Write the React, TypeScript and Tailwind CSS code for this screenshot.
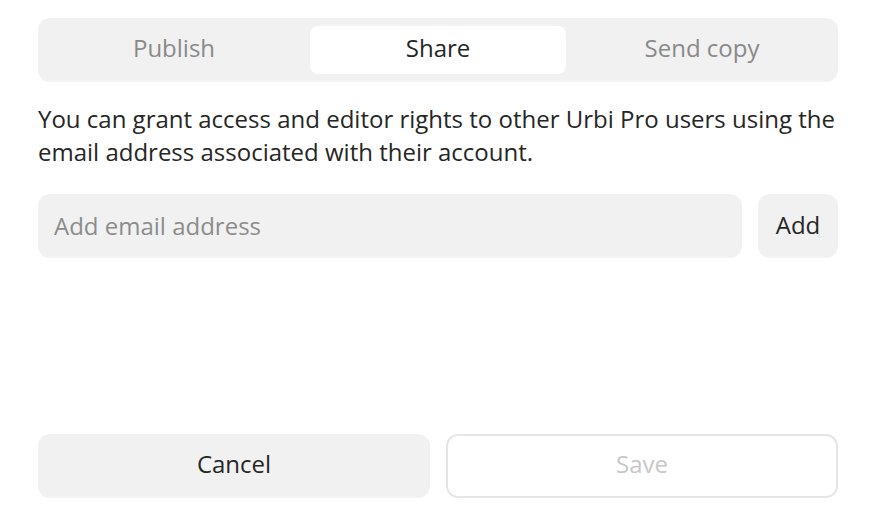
import { useState } from "react";

const TABS = ["Publish", "Share", "Send copy"];

export default function App() {
  const [tab, setTab] = useState(1);
  const [email, setEmail] = useState("");

  return (
    <div
      className="flex h-[516px] w-[876px] flex-col bg-white px-[38px] pt-[18px] pb-[18px] text-[#262626]"
      style={{ fontFamily: '"Open Sans", sans-serif' }}
    >
      <div className="grid grid-cols-3 gap-2 rounded-xl bg-[#f1f1f1] p-2">
        {TABS.map((label, i) => (
          <button
            key={label}
            onClick={() => setTab(i)}
            className={
              i === tab
                ? "h-12 rounded-lg bg-white pb-1 text-[24px] leading-none text-[#262626]"
                : "h-12 rounded-lg pb-1 text-[24px] leading-none text-[#898989]"
            }
          >
            {label}
          </button>
        ))}
      </div>

      <p className="mt-[20px] text-[24px] leading-[33px]">
        You can grant access and editor rights to other Urbi Pro users using the
        email address associated with their account.
      </p>

      <div className="mt-[26px] flex gap-4">
        <input
          value={email}
          onChange={(e) => setEmail(e.target.value)}
          placeholder="Add email address"
          className="h-16 min-w-0 flex-1 rounded-xl bg-[#f1f1f1] px-4 pb-0.5 text-[24px] outline-none placeholder:text-[#8c8c8c]"
        />
        <button className="h-16 w-20 rounded-xl bg-[#f1f1f1] pb-0.5 text-[24px] leading-none">
          Add
        </button>
      </div>

      <div className="mt-auto grid grid-cols-2 gap-4">
        <button className="h-16 rounded-xl bg-[#f1f1f1] pb-1 text-[24px] leading-none">
          Cancel
        </button>
        <button
          disabled
          className="h-16 rounded-xl border-2 border-[#e6e6e6] bg-white pb-1 text-[24px] leading-none text-[#c8c8c8]"
        >
          Save
        </button>
      </div>
    </div>
  );
}
